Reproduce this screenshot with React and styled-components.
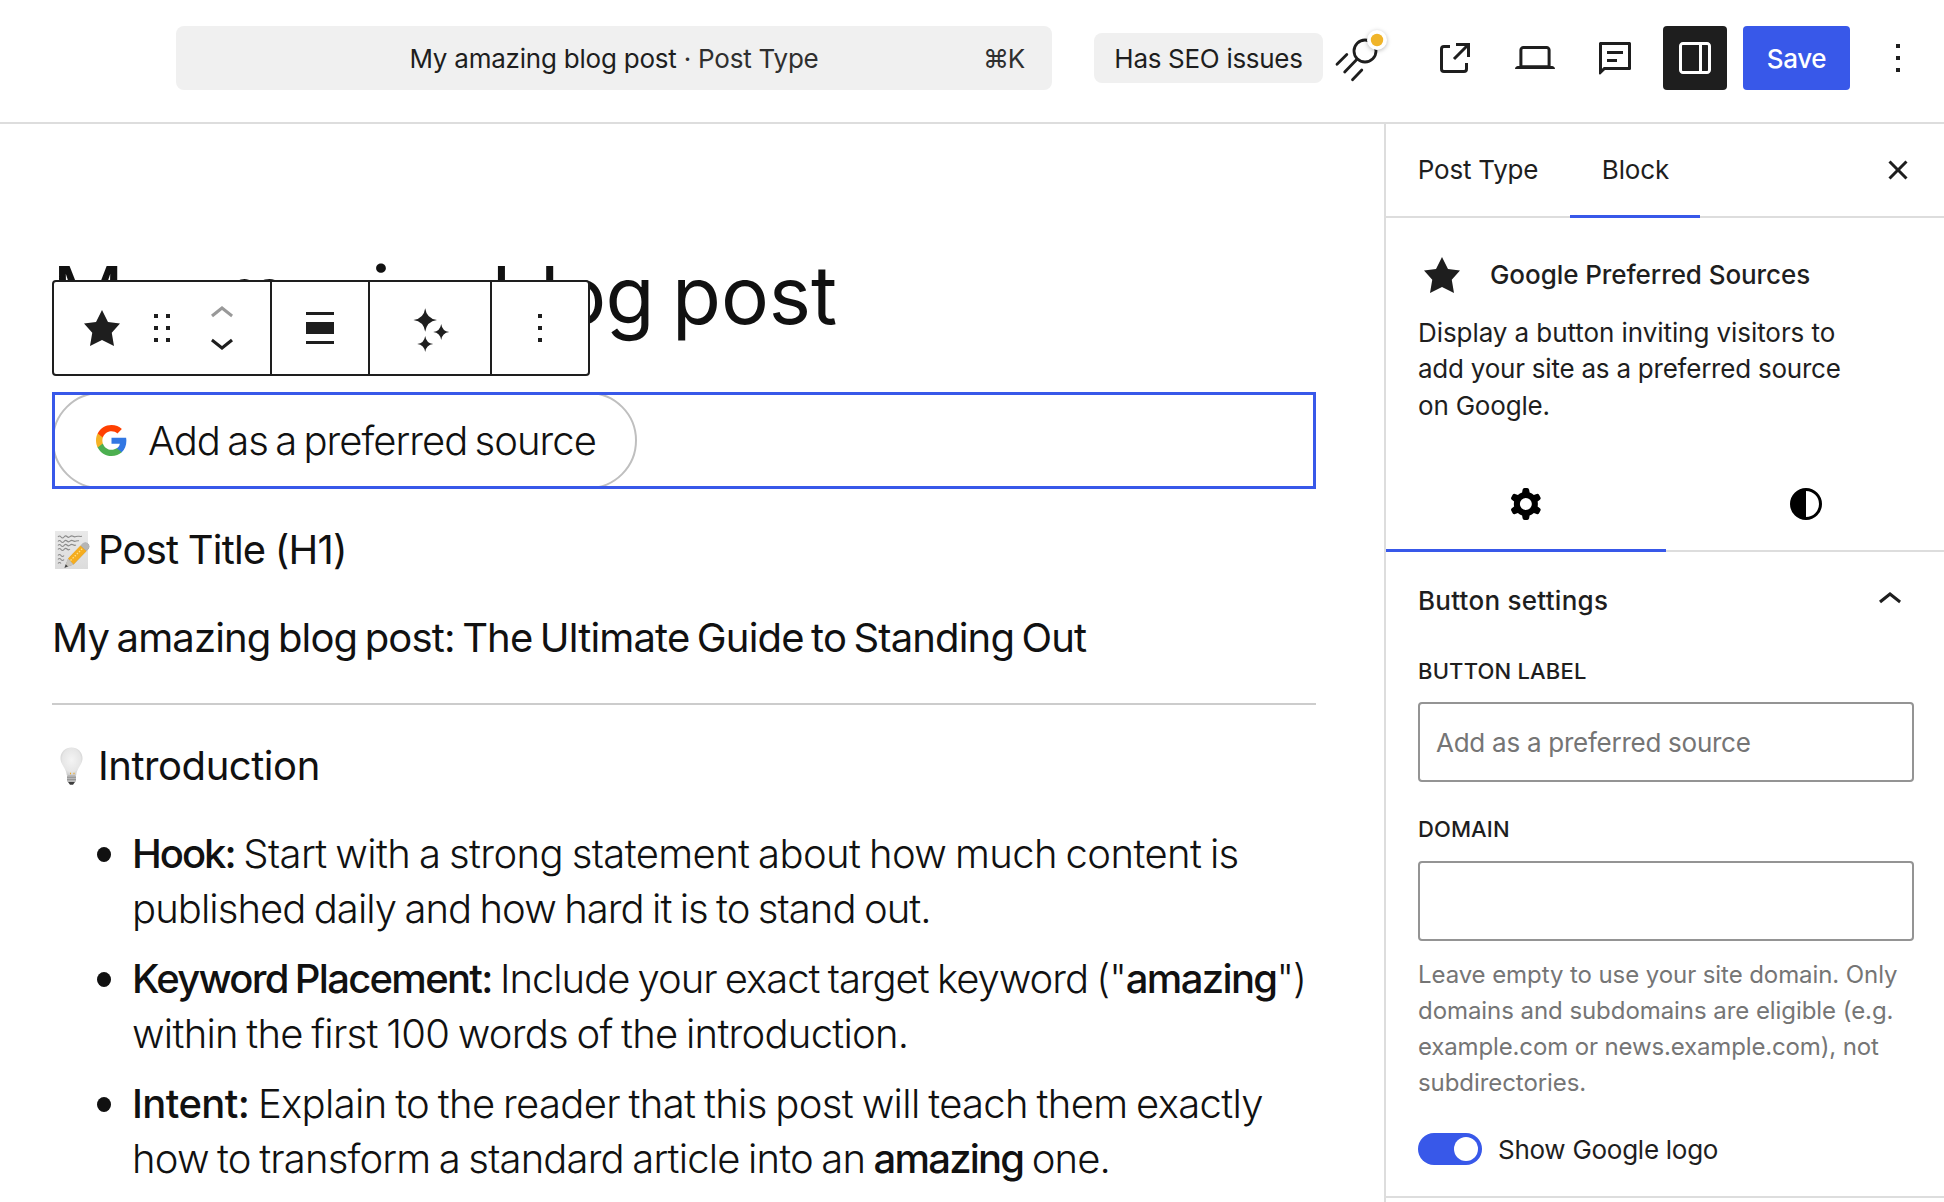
import React from "react";
import styled, { createGlobalStyle } from "styled-components";

const accent = "#3858e9";
const ink = "#1e1e1e";

const GlobalStyle = createGlobalStyle`
  *, *::before, *::after { box-sizing: border-box; }
  body {
    margin: 0;
    background: #fff;
    color: ${ink};
    font-family: Inter, "Liberation Sans", sans-serif;
    font-size: 26px;
    overflow: hidden;
  }
  button, input { font: inherit; color: inherit; }
`;

/* ---------- shared ---------- */

const Page = styled.div`
  display: flex;
  flex-direction: column;
  width: 1944px;
  height: 1202px;
  overflow: hidden;
`;

const Text = styled.span`
  letter-spacing: ${(p) => p.$track || 0}px;
  word-spacing: ${(p) => p.$words || 0}px;
  white-space: nowrap;
`;

const IconSvg = styled.svg`
  display: block;
  flex: none;
  width: ${(p) => p.$size || 48}px;
  height: ${(p) => p.$size || 48}px;
  fill: currentColor;
`;

const Icon = ({ d, size, box = 24 }) => (
  <IconSvg viewBox={`0 0 ${box} ${box}`} $size={size} aria-hidden="true">
    <path fillRule="evenodd" d={d} />
  </IconSvg>
);

const icons = {
  external:
    "M19.5 4.5h-7V6h4.44l-5.97 5.97 1.06 1.06L18 7.06v4.44h1.5v-7Zm-13 1a2 2 0 0 0-2 2v10a2 2 0 0 0 2 2h10a2 2 0 0 0 2-2v-3H17v3a.5.5 0 0 1-.5.5h-10a.5.5 0 0 1-.5-.5v-10a.5.5 0 0 1 .5-.5h3V5.5h-3Z",
  laptop:
    "M20.5 16h-.7V8c0-1.1-.9-2-2-2H6.2c-1.1 0-2 .9-2 2v8h-.7c-.8 0-1.5.7-1.5 1.5h20c0-.8-.7-1.5-1.5-1.5zM5.7 8c0-.3.2-.5.5-.5h11.6c.3 0 .5.2.5.5v7.6H5.7V8z",
  comment:
    "M4.8 4h14.4c.45 0 .8.35.8.8v12.4c0 .45-.35.8-.8.8H7l-2.2 2.1c-.3.25-.8.1-.8-.35V4.8c0-.45.35-.8.8-.8Zm.7 1.5v11.9l.9-.9h12.1v-11h-13ZM8 8.5h8V10H8V8.5Zm0 4h5V14H8v-1.5Z",
  drawer:
    "M18 4H6c-1.1 0-2 .9-2 2v12c0 1.1.9 2 2 2h12c1.1 0 2-.9 2-2V6c0-1.1-.9-2-2-2zm-4 14.5H6c-.3 0-.5-.2-.5-.5V6c0-.3.2-.5.5-.5h8v13zm4.5-.5c0 .3-.2.5-.5.5h-2.5v-13H18c.3 0 .5.2.5.5v12z",
  more: "M13 19h-2v-2h2v2zm0-6h-2v-2h2v2zm0-6h-2V5h2v2z",
  close:
    "M12 13.06l3.712 3.713 1.061-1.06L13.061 12l3.712-3.712-1.06-1.06L12 10.938 8.288 7.227l-1.061 1.06L10.939 12l-3.712 3.712 1.06 1.061L12 13.061z",
  star: "m10 1 3 6 6 .75-4.12 4.62L16 19l-6-3-6 3 1.13-6.63L1 7.75 7 7z",
  drag: "M8 7h2V5H8v2zm0 6h2v-2H8v2zm0 6h2v-2H8v2zm6-14v2h2V5h-2zm0 8h2v-2h-2v2zm0 6h2v-2h-2v2z",
  up: "M6.5 12.4L12 8l5.5 4.4-.9 1.2L12 10l-4.5 3.6-1-1.2z",
  down: "M17.5 11.6L12 16l-5.5-4.4.9-1.2L12 14l4.5-3.6 1 1.2z",
  align: "M19 5.5H5V4h14v1.5ZM19 20H5v-1.5h14V20ZM5 9h14v6H5V9Z",
  cog: "M10.289 4.836A1 1 0 0111.275 4h1.306a1 1 0 01.987.836l.244 1.466c.787.26 1.503.679 2.108 1.218l1.393-.522a1 1 0 011.216.437l.653 1.13a1 1 0 01-.23 1.273l-1.148.944a6.025 6.025 0 010 2.435l1.149.946a1 1 0 01.23 1.272l-.653 1.13a1 1 0 01-1.216.437l-1.394-.522c-.605.54-1.32.958-2.108 1.218l-.244 1.466a1 1 0 01-.987.836h-1.306a1 1 0 01-.986-.836l-.244-1.466a5.995 5.995 0 01-2.108-1.218l-1.394.522a1 1 0 01-1.217-.436l-.653-1.131a1 1 0 01.23-1.272l1.149-.946a6.026 6.026 0 010-2.435l-1.148-.944a1 1 0 01-.23-1.272l.653-1.131a1 1 0 011.217-.437l1.393.522a5.994 5.994 0 012.108-1.218l.244-1.466zM14.929 12a3 3 0 11-6 0 3 3 0 016 0z",
  styles: "M20 12a8 8 0 1 1-16 0 8 8 0 0 1 16 0Zm-1.5 0a6.5 6.5 0 0 1-6.5 6.5v-13a6.5 6.5 0 0 1 6.5 6.5Z",
};

/* ---------- top bar ---------- */

const Header = styled.header`
  display: flex;
  align-items: center;
  flex: none;
  height: 124px;
  padding: 0 14px 6px 176px;
  border-bottom: 2px solid #ddd;
`;

const CommandBar = styled.button`
  display: grid;
  grid-template-columns: 1fr auto 1fr;
  align-items: center;
  width: 876px;
  height: 64px;
  padding: 0 28px;
  border: 0;
  border-radius: 8px;
  background: #f0f0f0;
`;

const DocTitle = styled(Text)`
  grid-column: 2;
`;

const DocType = styled.span`
  color: #2f2f2f;
`;

const Shortcut = styled(Text)`
  justify-self: end;
  color: #2f2f2f;
`;

const SeoBadge = styled.div`
  display: flex;
  align-items: center;
  justify-content: center;
  width: 229px;
  height: 50px;
  margin-left: 42px;
  border-radius: 8px;
  background: #f0f0f0;
`;

const SeoSvg = styled.svg`
  display: block;
  width: 64px;
  height: 64px;
  margin-left: 6px;
  margin-right: 30px;
  overflow: visible;
`;

const HaloCircle = styled.circle`
  fill: #fff;
  filter: drop-shadow(0 1px 2px rgba(0, 0, 0, 0.28));
`;

const Actions = styled.div`
  display: flex;
  align-items: center;
  gap: 16px;
`;

const IconButton = styled.button`
  display: flex;
  align-items: center;
  justify-content: center;
  width: 64px;
  height: 64px;
  padding: 0;
  border: 0;
  border-radius: 4px;
  background: ${(p) => (p.$pressed ? ink : "transparent")};
  color: ${(p) => (p.$pressed ? "#fff" : ink)};
`;

const SaveButton = styled.button`
  width: 107px;
  height: 64px;
  padding: 0;
  border: 0;
  border-radius: 4px;
  background: ${accent};
  color: #fff;
  font-weight: 500;
`;

/* ---------- canvas ---------- */

const Body = styled.div`
  display: flex;
  flex: 1;
  min-height: 0;
`;

const Canvas = styled.main`
  position: relative;
  flex: 1;
  min-width: 0;
  padding: 123px 68px 0 52px;
  color: #111;
  font-size: 40px;
  line-height: 55px;
`;

const Title = styled.h1`
  margin: 0;
  font-size: 80px;
  line-height: 96px;
  font-weight: 400;
  white-space: nowrap;
`;

const Toolbar = styled.div`
  position: absolute;
  left: 52px;
  top: 156px;
  display: flex;
  width: 538px;
  height: 96px;
  border: 2px solid ${ink};
  border-radius: 4px;
  background: #fff;
  color: ${ink};
`;

const ToolGroup = styled.div`
  display: flex;
  align-items: center;
  justify-content: center;
  width: ${(p) => p.$width}px;
  gap: ${(p) => p.$gap || 0}px;
  & + & { border-left: 2px solid ${ink}; }
`;

const Movers = styled.div`
  display: flex;
  flex-direction: column;
  justify-content: center;
  width: 48px;
  height: 56px;
`;

const Mover = styled.div`
  display: flex;
  align-items: center;
  height: 28px;
  opacity: ${(p) => (p.$dim ? 0.45 : 1)};
`;

const SelectedBlock = styled.section`
  height: 97px;
  margin-top: 49px;
  outline: 3px solid ${accent};
  outline-offset: -3px;
`;

const SourceButton = styled.div`
  display: flex;
  align-items: center;
  gap: 21px;
  width: 585px;
  height: 97px;
  padding-left: 42px;
  border: 2px solid #bfbfbf;
  border-radius: 49px;
  font-weight: 300;
`;

const Heading = styled.h2`
  display: flex;
  align-items: center;
  gap: 8px;
  height: 55px;
  margin: 33px 0 0;
  font-size: 40px;
  font-weight: 400;
`;

const Rule = styled.hr`
  height: 2px;
  margin: 38px 0 0;
  border: 0;
  background: #ccc;
`;

const List = styled.ul`
  display: flex;
  flex-direction: column;
  gap: 15px;
  margin: 33px 0 0;
  padding: 0;
  list-style: none;
`;

const Item = styled.li`
  display: flex;
  font-weight: 300;
`;

const Bullet = styled.span`
  flex: none;
  width: 14px;
  height: 15px;
  margin: 21px 21px 0 45px;
  border-radius: 50%;
  background: #111;
`;

const Line = styled(Text)`
  display: block;
`;

const Strong = styled.strong`
  font-weight: 500;
  letter-spacing: ${(p) => p.$track}px;
`;

const EmojiSvg = styled.svg`
  display: block;
  flex: none;
  width: 38px;
  height: 42px;
`;

/* ---------- sidebar ---------- */

const Sidebar = styled.aside`
  display: flex;
  flex-direction: column;
  flex: none;
  width: 560px;
  border-left: 2px solid #ddd;
`;

const TabBar = styled.div`
  display: flex;
  align-items: stretch;
  height: 94px;
  padding-right: 14px;
  box-shadow: inset 0 -2px 0 #ddd;
`;

const Tab = styled.div`
  display: flex;
  align-items: center;
  justify-content: center;
  flex: none;
  width: ${(p) => p.$width}px;
  padding: 0 0 ${(p) => p.$lift || 0}px ${(p) => p.$nudge || 0}px;
  box-shadow: ${(p) => (p.$active ? `inset 0 -3px 0 ${accent}` : "none")};
`;

const CloseSlot = styled.div`
  display: flex;
  align-items: center;
  margin-left: auto;
  padding-bottom: 2px;
`;

const BlockCard = styled.div`
  height: 238px;
  padding: 32px 32px 0;
`;

const CardHead = styled.div`
  display: flex;
  align-items: center;
  height: 49px;
  gap: 24px;
  font-weight: 500;
`;

const StarSlot = styled.div`
  display: flex;
  align-items: center;
  justify-content: center;
  flex: none;
  width: 48px;
  height: 48px;
`;

const CardText = styled.p`
  margin: 16px 0 0;
  line-height: 36.4px;
`;

const IconTabs = styled.div`
  display: flex;
  height: 96px;
  color: #000;
  box-shadow: inset 0 -2px 0 #ddd;
`;

const PanelHead = styled.div`
  display: flex;
  align-items: center;
  justify-content: space-between;
  height: 96px;
  padding: 0 30px 0 32px;
  font-weight: 500;
`;

const PanelBody = styled.div`
  height: 548px;
  padding: 7.6px 30px 0 32px;
`;

const Field = styled.label`
  display: block;
  margin-bottom: ${(p) => (p.$last ? 16 : 32)}px;
`;

const FieldLabel = styled(Text)`
  display: block;
  margin-bottom: 16px;
  font-size: 22px;
  font-weight: 500;
  line-height: 30.8px;
`;

const Input = styled.input`
  display: block;
  width: 496px;
  height: 80px;
  padding: 1px 16px 0;
  border: 2px solid #949494;
  border-radius: 4px;
  background: #fff;
  letter-spacing: -0.26px;
  &::placeholder { color: #757575; opacity: 1; }
`;

const Help = styled.p`
  margin: 0 0 32px;
  color: #757575;
  font-size: 24px;
  line-height: 36px;
`;

const ToggleRow = styled.div`
  display: flex;
  align-items: center;
  height: 32px;
  gap: 16px;
`;

const Toggle = styled.div`
  display: flex;
  justify-content: flex-end;
  align-items: center;
  width: 64px;
  height: 32px;
  padding: 4px;
  border-radius: 16px;
  background: ${accent};
`;

const Knob = styled.div`
  width: 24px;
  height: 24px;
  border-radius: 50%;
  background: #fff;
`;

const PanelEdge = styled.div`
  height: 2px;
  background: #ddd;
`;

/* ---------- drawings ---------- */

const SeoIcon = () => (
  <SeoSvg viewBox="0 0 64 64" aria-hidden="true">
    <g fill="none" stroke={ink} strokeWidth="2.8" strokeLinecap="round">
      <circle cx="36" cy="25" r="11" />
      <path d="M28 33.3 15.7 46M17.8 28.5 8 38.2M32.8 44 23.5 53.8" />
    </g>
    <HaloCircle cx="48" cy="14" r="10" />
    <circle cx="48" cy="14" r="6.2" fill="#f0b429" />
  </SeoSvg>
);

const Spark = ({ x, y, r }) => (
  <path
    transform={`translate(${x} ${y}) scale(${r})`}
    d="M0-1Q.12-.12 1 0Q.12 .12 0 1Q-.12 .12-1 0Q-.12-.12 0-1Z"
  />
);

const Sparkles = () => (
  <IconSvg viewBox="0 0 24 24" aria-hidden="true">
    <Spark x={9.6} y={8} r={5.9} />
    <Spark x={17.6} y={14} r={4} />
    <Spark x={9.6} y={20} r={4} />
  </IconSvg>
);

const GoogleLogo = () => (
  <IconSvg viewBox="0 0 18 18" $size={31} aria-hidden="true">
    <path fill="#3277e3" d="M17.64 9.2c0-.637-.057-1.251-.164-1.84H9v3.481h4.844c-.209 1.125-.843 2.078-1.796 2.717v2.258h2.908c1.702-1.567 2.684-3.874 2.684-6.615z" />
    <path fill="#4caf50" d="M9 18c2.43 0 4.467-.806 5.956-2.18l-2.908-2.259c-.806.54-1.837.86-3.048.86-2.344 0-4.328-1.584-5.036-3.711H.957v2.332C2.438 15.983 5.482 18 9 18z" />
    <path fill="#f5b225" d="M3.964 10.71c-.18-.54-.282-1.117-.282-1.71s.102-1.17.282-1.71V4.958H.957C.347 6.173 0 7.548 0 9s.348 2.827.957 4.042l3.007-2.332z" />
    <path fill="#ff4000" d="M9 3.58c1.321 0 2.508.454 3.44 1.345l2.582-2.58C13.463.891 11.426 0 9 0 5.482 0 2.438 2.017.957 4.958L3.964 7.29C4.672 5.163 6.656 3.58 9 3.58z" />
  </IconSvg>
);

const MemoEmoji = () => (
  <EmojiSvg viewBox="0 0 38 42" role="img" aria-label="memo">
    <defs>
      <linearGradient id="paper" x1="0" y1="0" x2="0" y2="1">
        <stop offset="0" stopColor="#e9e9e9" />
        <stop offset="1" stopColor="#dcdcdc" />
      </linearGradient>
    </defs>
    <rect x="3" y="2" width="33" height="38" fill="url(#paper)" />
    <g fill="none" stroke="#8b8b8b" strokeWidth="1.1">
      <path d="M6 8q1.5-2 3 0t3 0 3-.5 3 .2 3-.4 3 .3 3-.3 3 0" />
      <path d="M6 12.5q1.5-2 3 0t3 0 3-.5 3 .2 3-.4 3 .3 3-.3" />
      <path d="M6 16.5q1.5-2 3 0t3 0 3-.5 3 .2 3-.4 3 .3" />
      <path d="M6 20.5q1.5-2 3 0t3 0 3-.5 3 .2" />
      <path d="M6 26.5q1.5-2 3 0t3 0M6 30.5q1.5-2 3 0t3 0M6 34.5q1.5-2 3 0" />
    </g>
    <path d="M12.5 38.7 16 30l15-15.5q3.5-2.2 6 1.2.9 2.3-.4 4L21.5 35.5Z" fill="#8d8d8d" />
    <path d="M16 29.5 28.5 16.5 34.5 22 21.5 35.5Z" fill="#f5ad20" />
    <path d="M18.5 31.5 31 19" stroke="#ffe28a" strokeWidth="1.3" strokeDasharray="1.5 1.5" />
    <path d="M28.5 16.5 31 14q3.5-2 6 1.7.8 2.3-.4 4L34.5 22Z" fill="#b5b5b5" />
    <path d="M12.5 38.7 16 29.5 21.5 35.5Z" fill="#c9c6bf" />
    <path d="M12.5 38.7 13.8 35.3 16 37.4Z" fill="#444" />
  </EmojiSvg>
);

const BulbEmoji = () => (
  <EmojiSvg viewBox="0 0 38 42" role="img" aria-label="light bulb">
    <defs>
      <radialGradient id="glass" cx=".5" cy=".45" r=".6">
        <stop offset="0" stopColor="#f4f4f4" />
        <stop offset=".7" stopColor="#e6e6e6" />
        <stop offset="1" stopColor="#c4c4c4" />
      </radialGradient>
    </defs>
    <path d="M19.5 2.5c6.2 0 11 4.6 11 10.7 0 6.3-5.5 9.3-6.3 17h-9.4c-.8-7.7-6.3-10.7-6.3-17 0-6.1 4.8-10.7 11-10.7Z" fill="url(#glass)" />
    <path d="M18 28.5h1M21.5 28.5h1" stroke="#eda51c" strokeWidth="1.6" />
    <rect x="15" y="30" width="9" height="7" rx="1.2" fill="#b9b9b9" />
    <path d="M15 32.3h9M15 34.6h9" stroke="#8a8a8a" strokeWidth=".8" />
    <path d="M16 37h7l-2 2.8h-3Z" fill="#3d3d3d" />
  </EmojiSvg>
);

/* ---------- page ---------- */

const TopBar = () => (
  <Header>
    <CommandBar>
      <DocTitle $track={-0.22}>
        My amazing blog post <DocType>· Post Type</DocType>
      </DocTitle>
      <Shortcut $track={-1.2}>⌘K</Shortcut>
    </CommandBar>
    <SeoBadge>
      <Text $track={-0.3}>Has SEO issues</Text>
    </SeoBadge>
    <SeoIcon />
    <Actions>
      <IconButton><Icon d={icons.external} /></IconButton>
      <IconButton><Icon d={icons.laptop} /></IconButton>
      <IconButton><Icon d={icons.comment} /></IconButton>
      <IconButton $pressed><Icon d={icons.drawer} /></IconButton>
      <SaveButton><Text $track={-0.3}>Save</Text></SaveButton>
      <IconButton><Icon d={icons.more} /></IconButton>
    </Actions>
  </Header>
);

const Editor = () => (
  <Canvas>
    <Title>
      <Text $track={-2.42} $words={-8}>My amazing </Text>
      <Text $track={-0.9}>blog</Text>
      <Text $track={-0.1} $words={-4}> post</Text>
    </Title>
    <Toolbar>
      <ToolGroup $width={216} $gap={12}>
        <StarSlot><Icon d={icons.star} size={40} box={20} /></StarSlot>
        <Icon d={icons.drag} />
        <Movers>
          <Mover $dim><Icon d={icons.up} /></Mover>
          <Mover><Icon d={icons.down} /></Mover>
        </Movers>
      </ToolGroup>
      <ToolGroup $width={98}><Icon d={icons.align} /></ToolGroup>
      <ToolGroup $width={122}><Sparkles /></ToolGroup>
      <ToolGroup $width={98}><Icon d={icons.more} /></ToolGroup>
    </Toolbar>
    <SelectedBlock>
      <SourceButton>
        <GoogleLogo />
        <Text $track={-0.98} $words={-3}>Add as a preferred source</Text>
      </SourceButton>
    </SelectedBlock>
    <Heading><MemoEmoji /><Text $track={-0.8} $words={-1}>Post Title (H1)</Text></Heading>
    <Heading><Text $track={-0.84} $words={-3}>My amazing blog post: The Ultimate Guide to Standing Out</Text></Heading>
    <Rule />
    <Heading><BulbEmoji /><Text $track={-0.45}>Introduction</Text></Heading>
    <List>
      <Item>
        <Bullet />
        <div>
          <Line $track={-0.6} $words={-2}><Strong $track={-2}>Hook:</Strong> Start with a strong statement about how much content is</Line>
          <Line $track={-0.94} $words={-2}>published daily and how hard it is to stand out.</Line>
        </div>
      </Item>
      <Item>
        <Bullet />
        <div>
          <Line $track={-1.02} $words={-2}><Strong $track={-1.7}>Keyword Placement:</Strong> Include your exact target keyword ("<Strong $track={-1.65}>amazing</Strong>")</Line>
          <Line $track={-0.74} $words={-2}>within the first 100 words of the introduction.</Line>
        </div>
      </Item>
      <Item>
        <Bullet />
        <div>
          <Line $track={-0.66} $words={-2}><Strong $track={-0.6}>Intent:</Strong> Explain to the reader that this post will teach them exactly</Line>
          <Line $track={-0.83} $words={-2}>how to transform a standard article into an <Strong $track={-1.8}>amazing</Strong> one.</Line>
        </div>
      </Item>
    </List>
  </Canvas>
);

const Settings = () => (
  <Sidebar>
    <TabBar>
      <Tab $width={184} $lift={4}><Text $track={-0.22}>Post Type</Text></Tab>
      <Tab $width={130} $lift={4} $nudge={1} $active><Text $track={-0.1}>Block</Text></Tab>
      <CloseSlot><IconButton><Icon d={icons.close} /></IconButton></CloseSlot>
    </TabBar>
    <BlockCard>
      <CardHead>
        <StarSlot><Icon d={icons.star} size={40} box={20} /></StarSlot>
        <Text $track={-0.07}>Google Preferred Sources</Text>
      </CardHead>
      <CardText>
        <Line $track={-0.07}>Display a button inviting visitors to</Line>
        <Line $track={-0.23}>add your site as a preferred source</Line>
        <Line $track={-0.2}>on Google.</Line>
      </CardText>
    </BlockCard>
    <IconTabs>
      <Tab $width={280} $active><Icon d={icons.cog} /></Tab>
      <Tab $width={280}><Icon d={icons.styles} /></Tab>
    </IconTabs>
    <PanelHead>
      <Text $track={0.26}>Button settings</Text>
      <Icon d={icons.up} />
    </PanelHead>
    <PanelBody>
      <Field>
        <FieldLabel $track={0.18}>BUTTON LABEL</FieldLabel>
        <Input placeholder="Add as a preferred source" />
      </Field>
      <Field $last>
        <FieldLabel $track={0.1}>DOMAIN</FieldLabel>
        <Input />
      </Field>
      <Help>
        <Line $track={-0.08}>Leave empty to use your site domain. Only</Line>
        <Line $track={-0.06}>domains and subdomains are eligible (e.g.</Line>
        <Line $track={-0.14}>example.com or news.example.com), not</Line>
        <Line $track={-0.07}>subdirectories.</Line>
      </Help>
      <ToggleRow>
        <Toggle><Knob /></Toggle>
        <Text $track={-0.27}>Show Google logo</Text>
      </ToggleRow>
    </PanelBody>
    <PanelEdge />
  </Sidebar>
);

export default function App() {
  return (
    <Page>
      <GlobalStyle />
      <TopBar />
      <Body>
        <Editor />
        <Settings />
      </Body>
    </Page>
  );
}
